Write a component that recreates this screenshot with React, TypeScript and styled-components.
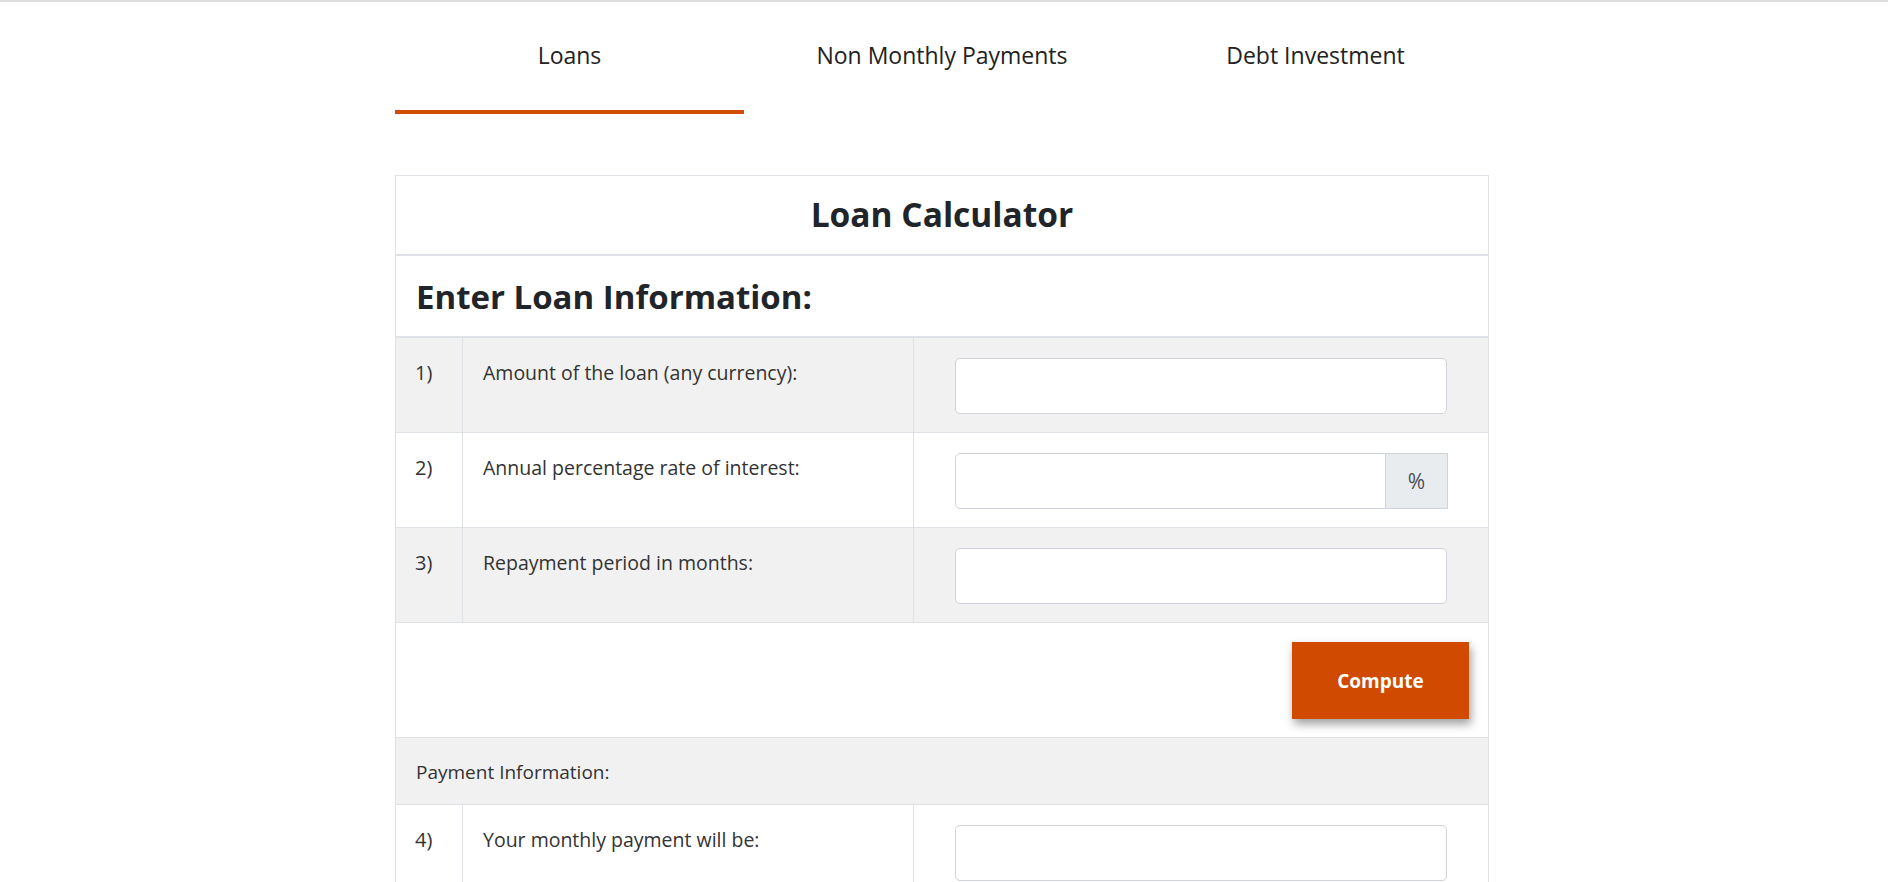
import React from "react";
import styled, { createGlobalStyle } from "styled-components";

const GlobalStyle = createGlobalStyle`
  html, body { margin: 0; padding: 0; background: #ffffff; }
  body { font-family: "Open Sans", "Noto Sans", sans-serif; color: #212529; }
  * { box-sizing: border-box; }
`;

const Page = styled.div`
  border-top: 2px solid #dcdee0;
  min-height: 100vh;
`;

const Container = styled.div`
  width: 1094px;
  margin-left: calc(50% - 549px);
`;

const TabBar = styled.nav`
  display: grid;
  grid-template-columns: 349px 396px 351px;
`;

const Tab = styled.div<{ $active?: boolean }>`
  height: 112px;
  padding-top: 38px;
  text-align: center;
  font-size: 23px;
  line-height: 30px;
  color: #222;
  border-bottom: 4px solid ${(p) => (p.$active ? "#d04a02" : "transparent")};
  cursor: pointer;
`;

const Card = styled.section`
  margin-top: 61px;
  border: 1px solid #dee2e6;
  margin-bottom: 60px;
`;

const TitleRow = styled.div`
  height: 80px;
  display: flex;
  align-items: center;
  justify-content: center;
  padding-bottom: 3px;
  border-bottom: 2px solid #dee2e6;
`;

const Title = styled.h2`
  margin: 0;
  font-size: 33.5px;
  font-weight: 700;
  color: #212529;
`;

const SectionRow = styled.div`
  height: 82px;
  display: flex;
  align-items: center;
  padding: 0 20px;
  border-bottom: 2px solid #dee2e6;
`;

const SectionTitle = styled.h3`
  margin: 0;
  font-size: 33px;
  font-weight: 700;
  color: #212529;
`;

const Row = styled.div<{ $shade?: boolean }>`
  display: grid;
  grid-template-columns: 67px 451px 1fr;
  background: ${(p) => (p.$shade ? "#f1f1f1" : "#ffffff")};
  border-bottom: 1px solid #dee2e6;
`;

const NumCell = styled.div`
  padding: 23px 19px;
  font-size: 20px;
  line-height: 24px;
  color: #333;
  border-right: 1px solid #dee2e6;
`;

const LabelCell = styled.div`
  padding: 23px 20px;
  font-size: 19.5px;
  line-height: 24px;
  color: #333;
  border-right: 1px solid #dee2e6;
`;

const InputCell = styled.div`
  padding: 20px 41px 18px 41px;
`;

const InputGroup = styled.div`
  display: flex;
  height: 56px;
`;

const TextInput = styled.input<{ $grouped?: boolean }>`
  flex: 1;
  min-width: 0;
  height: 56px;
  border: 1px solid #ced4da;
  border-radius: ${(p) => (p.$grouped ? "5px 0 0 5px" : "5px")};
  background: #fff;
  font-size: 18px;
  padding: 0 12px;
  outline: none;
`;

const Addon = styled.span`
  width: 62px;
  margin-right: -1px;
  display: flex;
  align-items: center;
  justify-content: center;
  background: #e9ecef;
  border: 1px solid #ced4da;
  border-left: none;
  font-size: 21px;
  color: #495057;
`;

const ActionRow = styled.div`
  display: flex;
  justify-content: flex-end;
  padding: 19px 19px 18px;
  border-bottom: 1px solid #dee2e6;
`;

const ComputeButton = styled.button`
  width: 177px;
  height: 77px;
  border: none;
  background: #d04a02;
  color: #fff;
  font-family: inherit;
  font-size: 19px;
  font-weight: 700;
  box-shadow: 2px 5px 9px rgba(0, 0, 0, 0.38);
  cursor: pointer;
`;

const InfoRow = styled.div`
  background: #f1f1f1;
  padding: 22px 20px 20px;
  font-size: 19px;
  line-height: 24px;
  color: #333;
  border-bottom: 1px solid #dee2e6;
`;

type Field = { n: string; label: string; addon?: string };

const inputs: Field[] = [
  { n: "1)", label: "Amount of the loan (any currency):" },
  { n: "2)", label: "Annual percentage rate of interest:", addon: "%" },
  { n: "3)", label: "Repayment period in months:" },
];

const outputs: Field[] = [
  { n: "4)", label: "Your monthly payment will be:" },
  { n: "5)", label: "Your total payment will be:" },
  { n: "6)", label: "Your total interest payments will be:" },
];

function FieldRow({ f, shade }: { f: Field; shade: boolean }) {
  return (
    <Row $shade={shade}>
      <NumCell>{f.n}</NumCell>
      <LabelCell>{f.label}</LabelCell>
      <InputCell>
        <InputGroup>
          <TextInput type="text" $grouped={!!f.addon} />
          {f.addon && <Addon>{f.addon}</Addon>}
        </InputGroup>
      </InputCell>
    </Row>
  );
}

export default function App() {
  return (
    <>
      <GlobalStyle />
      <Page>
        <Container>
          <TabBar>
            <Tab $active>Loans</Tab>
            <Tab>Non Monthly Payments</Tab>
            <Tab>Debt Investment</Tab>
          </TabBar>
          <Card>
            <TitleRow>
              <Title>Loan Calculator</Title>
            </TitleRow>
            <SectionRow>
              <SectionTitle>Enter Loan Information:</SectionTitle>
            </SectionRow>
            {inputs.map((f, i) => (
              <FieldRow key={f.n} f={f} shade={i % 2 === 0} />
            ))}
            <ActionRow>
              <ComputeButton type="button">Compute</ComputeButton>
            </ActionRow>
            <InfoRow>Payment Information:</InfoRow>
            {outputs.map((f, i) => (
              <FieldRow key={f.n} f={f} shade={i % 2 === 1} />
            ))}
          </Card>
        </Container>
      </Page>
    </>
  );
}
